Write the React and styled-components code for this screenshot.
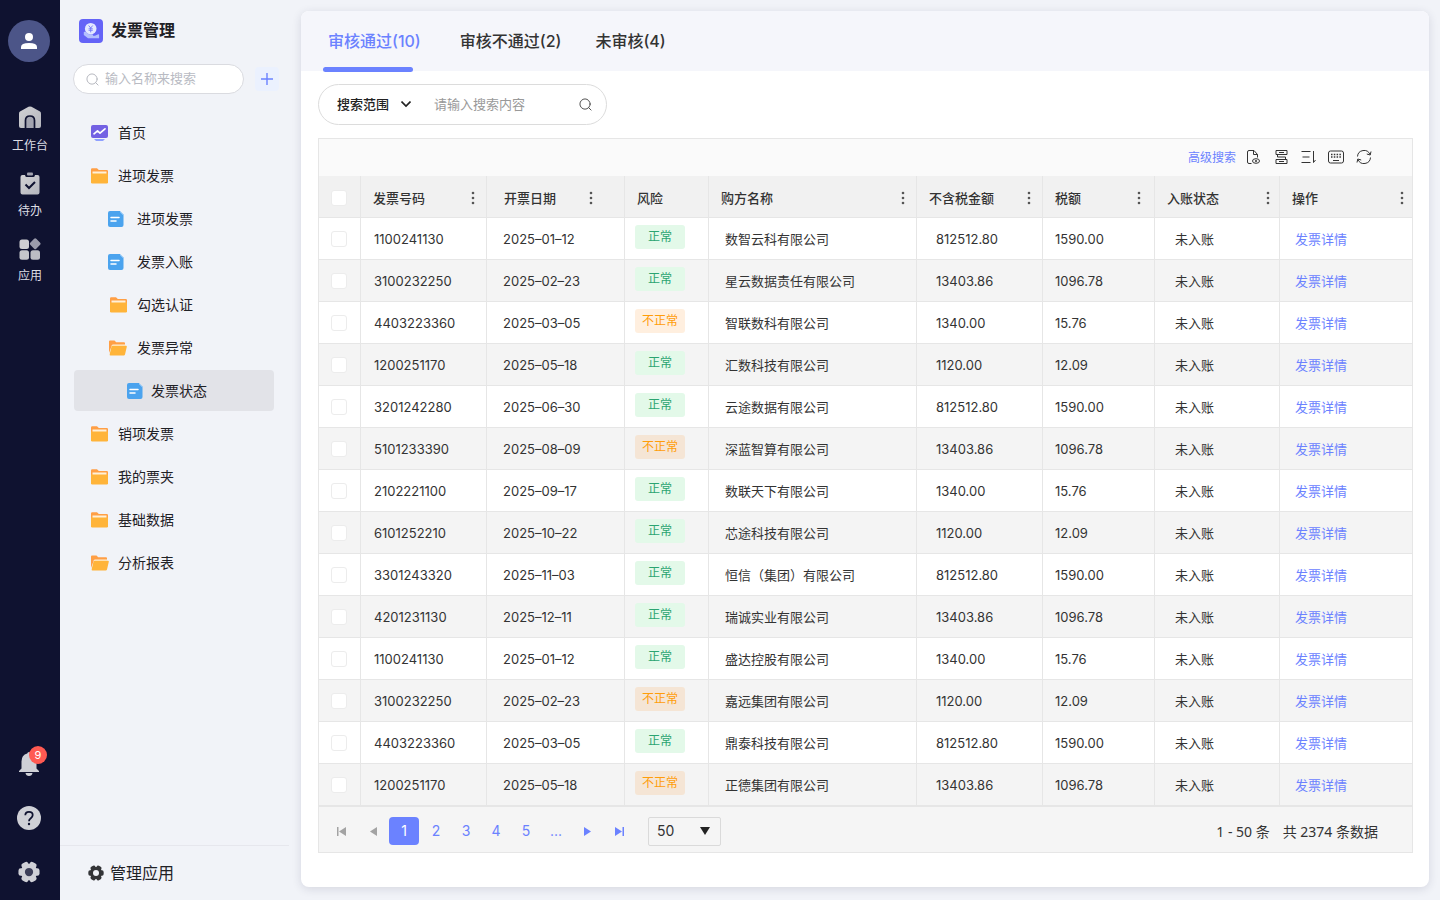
import React from 'react';
import styled, { createGlobalStyle, css } from 'styled-components';

const fontStack = 'Inter, "Noto Sans CJK SC", sans-serif';

const color = {
  rail: '#0f1230',
  page: '#f1f3f8',
  primary: '#6b82ff',
  ink: '#1f2126',
  text: '#333333',
  line: '#e6e6e6',
};

const GlobalStyle = createGlobalStyle`
  *, *::before, *::after { box-sizing: border-box; }
  body {
    margin: 0;
    background: ${color.page};
    color: ${color.text};
    font-family: ${fontStack};
    font-size: 13px;
  }
  button, input, select {
    margin: 0;
    padding: 0;
    border: 0;
    background: none;
    color: inherit;
    font: inherit;
  }
  button, select { cursor: pointer; }
  svg { display: block; flex: none; }
`;

const Page = styled.div`
  display: flex;
  min-height: 100vh;
`;

/* ---------- rail ---------- */

const Rail = styled.nav`
  display: flex;
  flex: none;
  flex-direction: column;
  align-items: center;
  width: 60px;
  padding: 20px 2px 14px 0;
  background: ${color.rail};
`;

const Avatar = styled.button`
  display: grid;
  place-items: center;
  width: 42px;
  height: 42px;
  border-radius: 50%;
  background: #4c5588;
`;

const RailMenu = styled.div`
  display: flex;
  flex-direction: column;
  gap: 17px;
  margin-top: 44px;
  padding-left: 2px;
`;

const RailItem = styled.button`
  display: flex;
  flex-direction: column;
  align-items: center;
  gap: 8px;
  color: #dcdde4;
  font-size: 12px;
  line-height: 16px;
`;

const RailTools = styled.div`
  display: flex;
  flex-direction: column;
  gap: 26px;
  margin-top: auto;
`;

const RailTool = styled.button`
  position: relative;
  display: grid;
  place-items: center;
  width: 28px;
  height: 28px;
`;

const Badge = styled.span`
  position: absolute;
  top: -4px;
  right: -4px;
  width: 18px;
  height: 18px;
  border-radius: 50%;
  background: #ff5a52;
  color: #fff;
  font-size: 11px;
  line-height: 18px;
  text-align: center;
`;

/* ---------- sidebar ---------- */

const Sidebar = styled.aside`
  display: flex;
  flex: none;
  flex-direction: column;
  width: 229px;
`;

const Brand = styled.header`
  display: flex;
  align-items: center;
  gap: 8px;
  padding: 19px 19px 0;
`;

const BrandName = styled.h1`
  margin: 0;
  color: ${color.ink};
  font-size: 16px;
  font-weight: 600;
  line-height: 22px;
  padding-bottom: 2px;
`;

const SideSearch = styled.div`
  display: flex;
  align-items: center;
  gap: 11px;
  padding: 21px 10px 0 13px;
`;

const SideField = styled.label`
  display: flex;
  flex: 1;
  align-items: center;
  gap: 6px;
  height: 30px;
  min-width: 0;
  padding: 0 12px;
  border: 1px solid #dadbe0;
  border-radius: 15px;
  background: #fff;
`;

const TextInput = styled.input`
  flex: 1;
  min-width: 0;
  padding-bottom: 2px;
  outline: none;
  &::placeholder { color: ${(p) => p.$hint}; opacity: 1; }
`;

const AddButton = styled.button`
  display: grid;
  place-items: center;
  width: 24px;
  height: 24px;
  border-radius: 4px;
  background: #ebf1fe;
`;

const Tree = styled.nav`
  display: flex;
  flex-direction: column;
  gap: 2px;
  padding: 18px 15px 0 14px;
`;

const levels = [
  { indent: 17, slot: 17 },
  { indent: 34, slot: 19 },
  { indent: 53, slot: 16 },
];

const TreeItem = styled.a`
  display: grid;
  grid-template-columns: ${(p) => levels[p.$level].slot}px 1fr;
  align-items: center;
  gap: ${(p) => (p.$level === 2 ? 8 : 10)}px;
  height: 41px;
  padding-left: ${(p) => levels[p.$level].indent}px;
  border-radius: 4px;
  background: ${(p) => (p.$active ? '#e2e3e8' : 'transparent')};
  color: ${color.ink};
  font-size: 14px;
  text-decoration: none;
  svg { justify-self: ${(p) => (p.$end ? 'end' : 'start')}; }
`;

const TreeLabel = styled.span`
  padding-bottom: 2px;
`;

const SideFooter = styled.footer`
  margin-top: auto;
  border-top: 1px solid #e6e7ed;
`;

const ManageButton = styled.button`
  display: flex;
  align-items: center;
  gap: 6px;
  height: 54px;
  padding-left: 28px;
  color: ${color.ink};
  font-size: 16px;
`;

/* ---------- content ---------- */

const Card = styled.main`
  flex: 1;
  min-width: 0;
  margin: 11px 11px 13px 12px;
  border-radius: 8px;
  background: #fff;
  box-shadow: 0 2px 10px rgba(40, 44, 80, 0.14);
`;

const Tabs = styled.div`
  display: flex;
  gap: 34px;
  height: 60px;
  padding-left: 22px;
  border-radius: 8px 8px 0 0;
  background: #f5f6fb;
`;

const Tab = styled.button`
  position: relative;
  padding-bottom: 2px;
  color: ${color.text};
  font-size: 16px;
  font-weight: 500;
  ${(p) =>
    p.$active &&
    css`
      padding: 0 5px 2px;
      color: ${color.primary};
      &::after {
        position: absolute;
        bottom: -1px;
        left: 0;
        width: 90px;
        height: 5px;
        border-radius: 3px;
        background: ${color.primary};
        content: '';
      }
    `}
`;

const Body = styled.div`
  padding: 13px 16px 34px 17px;
`;

const SearchBar = styled.div`
  display: flex;
  align-items: center;
  width: 289px;
  height: 41px;
  padding: 0 14px 0 18px;
  border: 1px solid #dcdcdc;
  border-radius: 21px;
`;

const SelectWrap = styled.label`
  display: grid;
  align-items: center;
  svg, select { grid-area: 1 / 1; }
  svg { justify-self: end; pointer-events: none; }
`;

const ScopeSelect = styled.select`
  width: 74px;
  padding-bottom: 2px;
  appearance: none;
  outline: none;
  color: #222;
  font-weight: 500;
`;

const Keyword = styled(TextInput)`
  margin-left: 23px;
`;

const Grid = styled.section`
  margin-top: 13px;
  border: 1px solid ${color.line};
`;

const Toolbar = styled.div`
  display: flex;
  align-items: center;
  justify-content: flex-end;
  gap: 12px;
  height: 37px;
  padding: 0 40px 1px 0;
  background: #fafafa;
`;

const AdvancedLink = styled.a`
  margin-right: -4px;
  padding-bottom: 1px;
  color: ${color.primary};
  font-size: 12px;
  text-decoration: none;
`;

const Table = styled.table`
  width: 100%;
  border-collapse: separate;
  border-spacing: 0;
  table-layout: fixed;
`;

const HeadCell = styled.th`
  height: 42px;
  width: ${(p) => p.$width}px;
  padding: 2px ${(p) => p.$end || 0}px 0 ${(p) => p.$start || 12}px;
  border-right: 1px solid ${color.line};
  border-bottom: 1px solid ${color.line};
  background: #f1f1f1;
  font-weight: 500;
  text-align: left;
  &:last-child { border-right: 0; }
`;

const HeadContent = styled.div`
  display: flex;
  align-items: center;
  justify-content: space-between;
  white-space: nowrap;
`;

const Row = styled.tr`
  background: #fff;
  &:nth-child(even) { background: #f4f4f4; }
`;

const Cell = styled.td`
  height: 42px;
  padding: 0 0 0 ${(p) => p.$start}px;
  border-right: 1px solid ${color.line};
  border-bottom: 1px solid ${color.line};
  white-space: nowrap;
  &:last-child { border-right: 0; }
`;

const Check = styled.input`
  display: block;
  width: 16px;
  height: 16px;
  border: 1px solid #ececec;
  border-radius: 3px;
  background: #fff;
  appearance: none;
  &:checked { border-color: ${color.primary}; background: ${color.primary}; }
`;

const Tag = styled.span`
  display: block;
  width: 50px;
  height: 24px;
  margin-bottom: 3px;
  border-radius: 3px;
  background: ${(p) => (p.$ok ? '#e3f9e9' : 'rgba(255, 150, 40, 0.15)')};
  color: ${(p) => (p.$ok ? '#2ba471' : '#ff9d0a')};
  font-size: 12px;
  line-height: 24px;
  text-align: center;
`;

const DetailLink = styled.a`
  color: ${color.primary};
  text-decoration: none;
`;

const Pager = styled.div`
  display: flex;
  align-items: center;
  height: 46px;
  padding: 3px 34px 0 6px;
  border-top: 1px solid ${color.line};
  background: #f5f5f5;
`;

const NavButton = styled.button`
  display: grid;
  place-items: center;
  width: 32px;
  height: 28px;
  color: ${(p) => (p.disabled ? '#a3a3a3' : color.primary)};
`;

const PageButton = styled.button`
  width: 30px;
  height: 28px;
  margin-right: ${(p) => (p.$active ? 2 : 0)}px;
  padding-bottom: 2px;
  border-radius: 4px;
  background: ${(p) => (p.$active ? color.primary : 'transparent')};
  color: ${(p) => (p.$active ? '#fff' : color.primary)};
  font-size: 14px;
`;

const SizeWrap = styled(SelectWrap)`
  margin-left: 13px;
  svg { margin-right: 11px; }
`;

const SizeSelect = styled.select`
  width: 73px;
  height: 29px;
  padding: 0 0 2px 8px;
  border: 1px solid #dadada;
  border-radius: 2px;
  appearance: none;
  font-size: 14px;
`;

const Summary = styled.p`
  display: flex;
  gap: 13px;
  margin: 0 0 0 auto;
  font-family: "Noto Sans", "Noto Sans CJK SC", sans-serif;
  font-size: 14px;
`;

/* ---------- icons ---------- */

const FolderIcon = () => (
  <svg width="17" height="16" viewBox="0 0 17 16">
    <path d="M0 1.5Q0 .3 1.2.3H6L7.8 2H15.800Q17 2 17 3.200V8H0Z" fill="#ff9f45" />
    <path d="M1.500 3.500h14v4h-14z" fill="#fff0d8" />
    <path d="M0 5.500h17v8.700q0 1.300-1.300 1.300H1.300Q0 15.500 0 14.200Z" fill="#ffb43a" />
  </svg>
);

const FolderOpenIcon = () => (
  <svg width="18" height="16" viewBox="0 0 18 16">
    <path d="M0 1.500Q0 .5 1 .5H5.500L7.200 2.200H15Q16 2.200 16 3.200V5H3L0 13Z" fill="#ff9f45" />
    <path d="M3 5L2.600 6.200H16V4.600H4Q3.200 4.500 3 5Z" fill="#fff0d8" />
    <path d="M3.500 5.800H17q1 0 .8 1l-1.800 7.700q-.3 1-1.300 1H1.500Q.4 15.500.7 14.300L2.500 6.600Q2.700 5.800 3.500 5.800Z" fill="#ffb43a" />
  </svg>
);

const DocIcon = () => (
  <svg width="16" height="16" viewBox="0 0 16 16">
    <path d="M2 0H12L15.500 3.500V14q0 2-2 2H2Q0 16 0 14V2Q0 0 2 0Z" fill="#4ba3ee" />
    <path d="M12 0L15.500 3.500V4.500L12 1Z" fill="#b9dcfb" />
    <path d="M3 6.500h8M3 10h5" stroke="#fff" strokeWidth="1.500" strokeLinecap="round" />
  </svg>
);

const HomeIcon = () => (
  <svg width="17" height="16" viewBox="0 0 17 16">
    <rect width="17" height="13" rx="2" fill="#7361e3" />
    <path d="M3 8.800L6.500 5.800L9 8.200L14 3.800" fill="none" stroke="#fff" strokeWidth="1.700" strokeLinecap="round" strokeLinejoin="round" />
    <path d="M3 14h11l-2 2H5z" fill="#8fa0ff" />
  </svg>
);

const SearchIcon = ({ size, stroke }) => (
  <svg width={size} height={size} viewBox="0 0 14 14" fill="none" stroke={stroke} strokeLinecap="round">
    <circle cx="6.500" cy="6.500" r="5.500" />
    <path d="M10.500 10.500L13 13" />
  </svg>
);

const GearIcon = ({ size, fill, hole }) => (
  <svg width={size} height={size} viewBox="0 0 24 24" fill={fill}>
    <circle cx="12" cy="12" r="9" />
    {[0, 60, 120].map((angle) => (
      <rect key={angle} x=".5" y="8" width="23" height="8" rx="2.500" transform={`rotate(${angle} 12 12)`} />
    ))}
    <circle cx="12" cy="12" r="4.500" fill={hole} />
  </svg>
);

const BrandIcon = () => (
  <svg width="24" height="24" viewBox="0 0 24 24">
    <rect width="24" height="24" rx="4" fill="#6463f7" />
    <circle cx="11.700" cy="9.700" r="5.800" fill="#e3e8ff" />
    <path d="M9.900 6.800l1.800 2.200L13.500 6.800M11.700 9V13M10 9.800h3.400M10 11.300h3.400" fill="none" stroke="#6f78f8" strokeWidth=".9" strokeLinecap="round" />
    <path d="M4.800 13q1.700-.8 3 .6l2 1.700h3.200q1.600.3 1 1.500h2l3.200-1.500q1.300 0 .9 1.300v2.600H9L4.800 16Z" fill="#b3bffd" />
  </svg>
);

const Kebab = () => (
  <svg width="4" height="14" viewBox="0 0 4 14" fill="#555">
    <circle cx="2" cy="2" r="1.300" />
    <circle cx="2" cy="7" r="1.300" />
    <circle cx="2" cy="12" r="1.300" />
  </svg>
);

const RailGradient = ({ id }) => (
  <linearGradient id={id} x1="0" y1="0" x2="1" y2="1">
    <stop offset="0" stopColor="#d2d2d4" />
    <stop offset="1" stopColor="#b4b5bd" />
  </linearGradient>
);

const WorkIcon = () => (
  <svg width="24" height="24" viewBox="0 0 24 24">
    <defs><RailGradient id="railWork" /></defs>
    <path d="M1 7.500Q1 6.300 2 5.600L10.500 .8Q12 0 13.500 .8L22 5.600Q23 6.300 23 7.500V20Q23 22 21 22H3Q1 22 1 20Z" fill="url(#railWork)" />
    <path d="M7.500 22V14.500Q7.500 10 12 10Q16.500 10 16.500 14.500V22" fill="#a3a4b0" stroke={color.rail} strokeWidth="1.700" />
  </svg>
);

const TodoIcon = () => (
  <svg width="24" height="24" viewBox="0 0 24 24">
    <defs><RailGradient id="railTodo" /></defs>
    <path d="M4.500 4H7Q7.200 6 8.500 6H15.500Q16.800 6 17 4H19.500Q21.500 4 21.500 6V21.500Q21.500 23.500 19.500 23.500H4.500Q2.500 23.500 2.500 21.500V6Q2.500 4 4.500 4Z" fill="url(#railTodo)" />
    <rect x="9" y="1.500" width="6" height="3" rx="1" fill="#a3a4b0" />
    <path d="M7.500 13.500L11 17L17 11" fill="none" stroke={color.rail} strokeWidth="2" />
  </svg>
);

const AppsIcon = () => (
  <svg width="24" height="24" viewBox="0 0 24 24">
    <rect x="1.500" y="3.500" width="9.500" height="9.500" rx="2.500" fill="#cfcfd2" />
    <rect x="13" y="3.500" width="8.500" height="8.500" rx="1.500" fill="#9a9bab" transform="rotate(45 17.200 7.700)" />
    <rect x="1.500" y="14.200" width="9.500" height="9.500" rx="2.500" fill="#c6c7cb" />
    <rect x="12.500" y="14.200" width="9.500" height="9.500" rx="2.500" fill="#bcbdc4" />
  </svg>
);

const ToolSvg = ({ children }) => (
  <svg width="16" height="16" viewBox="0 0 16 16" fill="none" stroke="#333">
    {children}
  </svg>
);

const PreviewIcon = () => (
  <ToolSvg>
    <path d="M7.500 14.500H5Q3.500 14.500 3.500 13V3Q3.500 1.500 5 1.500H10L13.500 5.500V8.500M9.500 1.500V5.500H13.500" />
    <ellipse cx="12" cy="12" rx="3.500" ry="2.300" />
    <circle cx="12" cy="12" r=".7" />
  </ToolSvg>
);

const FlowIcon = () => (
  <ToolSvg>
    <path d="M4 1.500H15V5.500H4ZM4 10.500H15V14.500H4ZM7 3.500H12M7 12.500H12M5.500 5.500V8H13.500V10.500" />
  </ToolSvg>
);

const SortIcon = () => (
  <ToolSvg>
    <path d="M1.500 2.500H10.500M2.500 8H9.500M1.500 13.500H10.500M13.500 2V13.500L15.500 11" />
  </ToolSvg>
);

const KeyboardIcon = () => (
  <ToolSvg>
    <rect x=".5" y="2" width="15" height="12" rx="2" />
    <path d="M3 5.500H13.500M3 8H13.500" strokeDasharray="1.500 1.300" strokeWidth="1.500" />
    <path d="M5 11.500H11" />
  </ToolSvg>
);

const RefreshIcon = () => (
  <ToolSvg>
    <path d="M1.500 7.500A6.500 6.500 0 0 1 14 5.500M14.500 8.500A6.500 6.500 0 0 1 2 10.500M15 2.500L14.200 6L10.800 5M1 13.500L1.800 10L5.200 11" />
  </ToolSvg>
);

/* ---------- data ---------- */

const railMenu = [
  { label: '工作台', Icon: WorkIcon },
  { label: '待办', Icon: TodoIcon },
  { label: '应用', Icon: AppsIcon },
];

const tree = [
  { label: '首页', level: 0, Icon: HomeIcon },
  { label: '进项发票', level: 0, Icon: FolderIcon },
  { label: '进项发票', level: 1, Icon: DocIcon },
  { label: '发票入账', level: 1, Icon: DocIcon },
  { label: '勾选认证', level: 1, Icon: FolderIcon },
  { label: '发票异常', level: 1, Icon: FolderOpenIcon },
  { label: '发票状态', level: 2, Icon: DocIcon, active: true },
  { label: '销项发票', level: 0, Icon: FolderIcon },
  { label: '我的票夹', level: 0, Icon: FolderIcon },
  { label: '基础数据', level: 0, Icon: FolderIcon },
  { label: '分析报表', level: 0, Icon: FolderOpenIcon },
];

const columns = [
  { label: '发票号码', width: 126, end: 11 },
  { label: '开票日期', width: 138, start: 17, end: 31 },
  { label: '风险', width: 84 },
  { label: '购方名称', width: 208, end: 11 },
  { label: '不含税金额', width: 126, end: 11 },
  { label: '税额', width: 112, end: 13 },
  { label: '入账状态', width: 125, end: 9 },
  { label: '操作', width: 132, end: 8 },
];

const amounts = [
  ['812512.80', '1590.00'],
  ['13403.86', '1096.78'],
  ['1340.00', '15.76'],
  ['1120.00', '12.09'],
];

const invoices = [
  ['1100241130', '2025–01–12', true, '数智云科有限公司'],
  ['3100232250', '2025–02–23', true, '星云数据责任有限公司'],
  ['4403223360', '2025–03–05', false, '智联数科有限公司'],
  ['1200251170', '2025–05–18', true, '汇数科技有限公司'],
  ['3201242280', '2025–06–30', true, '云途数据有限公司'],
  ['5101233390', '2025–08–09', false, '深蓝智算有限公司'],
  ['2102221100', '2025–09–17', true, '数联天下有限公司'],
  ['6101252210', '2025–10–22', true, '芯途科技有限公司'],
  ['3301243320', '2025–11–03', true, '恒信（集团）有限公司'],
  ['4201231130', '2025–12–11', true, '瑞诚实业有限公司'],
  ['1100241130', '2025–01–12', true, '盛达控股有限公司'],
  ['3100232250', '2025–02–23', false, '嘉远集团有限公司'],
  ['4403223360', '2025–03–05', true, '鼎泰科技有限公司'],
  ['1200251170', '2025–05–18', false, '正德集团有限公司'],
];

export default function App() {
  return (
    <Page>
      <GlobalStyle />
      <Rail aria-label="主导航">
        <Avatar aria-label="个人中心">
          <svg width="16" height="16" viewBox="0 0 16 16" fill="#fff">
            <circle cx="8" cy="4" r="4" />
            <path d="M0 16V14Q0 10 8 10Q16 10 16 14V16Z" />
          </svg>
        </Avatar>
        <RailMenu>
          {railMenu.map(({ label, Icon }) => (
            <RailItem key={label}>
              <Icon />
              {label}
            </RailItem>
          ))}
        </RailMenu>
        <RailTools>
          <RailTool aria-label="通知">
            <svg width="22" height="25" viewBox="0 0 22 25" fill="#cfd0d6">
              <path d="M11 0Q12.500 0 12.800 1.600Q18.500 3 18.500 9.500V16.500L21 19V20H1V19L3.500 16.500V9.500Q3.500 3 9.200 1.600Q9.500 0 11 0Z" />
              <path d="M7.500 21H14.500Q14 24 11 24Q8 24 7.500 21Z" />
            </svg>
            <Badge>9</Badge>
          </RailTool>
          <RailTool aria-label="帮助">
            <svg width="24" height="24" viewBox="0 0 24 24">
              <circle cx="12" cy="12" r="12" fill="#cfd0d6" />
              <path d="M8.300 9.200Q8.300 5.800 12 5.800Q15.700 5.800 15.700 9Q15.700 10.800 13.800 12.200Q12 13.500 12 15.200" fill="none" stroke={color.rail} strokeWidth="1.800" />
              <circle cx="12" cy="18" r="1.200" fill={color.rail} />
            </svg>
          </RailTool>
          <RailTool aria-label="设置">
            <GearIcon size={22} fill="#cfd0d6" hole="#3c3e58" />
          </RailTool>
        </RailTools>
      </Rail>

      <Sidebar>
        <Brand>
          <BrandIcon />
          <BrandName>发票管理</BrandName>
        </Brand>
        <SideSearch>
          <SideField>
            <SearchIcon size={13} stroke="#b0b2ba" />
            <TextInput $hint="#b9bbc3" aria-label="搜索菜单" placeholder="输入名称来搜索" />
          </SideField>
          <AddButton aria-label="新增">
            <svg width="12" height="12" viewBox="0 0 12 12" stroke={color.primary} strokeWidth="1.400">
              <path d="M6 0V12M0 6H12" />
            </svg>
          </AddButton>
        </SideSearch>
        <Tree aria-label="发票菜单">
          {tree.map(({ label, level, Icon, active }, i) => (
            <TreeItem
              key={i}
              href="#"
              $level={level}
              $active={active}
              $end={level === 1 && Icon !== DocIcon}
              aria-current={active ? 'page' : undefined}
            >
              <Icon />
              <TreeLabel>{label}</TreeLabel>
            </TreeItem>
          ))}
        </Tree>
        <SideFooter>
          <ManageButton>
            <GearIcon size={16} fill="#333437" hole={color.page} />
            <TreeLabel>管理应用</TreeLabel>
          </ManageButton>
        </SideFooter>
      </Sidebar>

      <Card>
        <Tabs role="tablist">
          <Tab role="tab" aria-selected="true" $active>审核通过(10)</Tab>
          <Tab role="tab" aria-selected="false">审核不通过(2)</Tab>
          <Tab role="tab" aria-selected="false">未审核(4)</Tab>
        </Tabs>
        <Body>
          <SearchBar>
            <SelectWrap>
              <ScopeSelect aria-label="搜索范围">
                <option>搜索范围</option>
              </ScopeSelect>
              <svg width="10" height="7" viewBox="0 0 10 7" fill="none" stroke="#222" strokeWidth="1.600">
                <path d="M.5 .5L5 5L9.500 .5" />
              </svg>
            </SelectWrap>
            <Keyword $hint="#999" aria-label="搜索内容" placeholder="请输入搜索内容" />
            <SearchIcon size={13} stroke="#444" />
          </SearchBar>

          <Grid>
            <Toolbar>
              <AdvancedLink href="#">高级搜索</AdvancedLink>
              <button aria-label="预览"><PreviewIcon /></button>
              <button aria-label="流程"><FlowIcon /></button>
              <button aria-label="排序"><SortIcon /></button>
              <button aria-label="键盘"><KeyboardIcon /></button>
              <button aria-label="刷新"><RefreshIcon /></button>
            </Toolbar>
            <Table>
              <thead>
                <tr>
                  <HeadCell $width={42}>
                    <Check type="checkbox" aria-label="全选" />
                  </HeadCell>
                  {columns.map(({ label, width, start, end }) => (
                    <HeadCell key={label} $width={width} $start={start} $end={end}>
                      <HeadContent>
                        {label}
                        {end && <Kebab />}
                      </HeadContent>
                    </HeadCell>
                  ))}
                </tr>
              </thead>
              <tbody>
                {invoices.map(([number, date, ok, buyer], i) => (
                  <Row key={i}>
                    <Cell $start={12}>
                      <Check type="checkbox" aria-label={`选择 ${number}`} />
                    </Cell>
                    <Cell $start={13}>{number}</Cell>
                    <Cell $start={16}>{date}</Cell>
                    <Cell $start={10}>
                      <Tag $ok={ok}>{ok ? '正常' : '不正常'}</Tag>
                    </Cell>
                    <Cell $start={16}>{buyer}</Cell>
                    <Cell $start={19}>{amounts[i % 4][0]}</Cell>
                    <Cell $start={12}>{amounts[i % 4][1]}</Cell>
                    <Cell $start={20}>未入账</Cell>
                    <Cell $start={15}>
                      <DetailLink href="#">发票详情</DetailLink>
                    </Cell>
                  </Row>
                ))}
              </tbody>
            </Table>
            <Pager>
              <NavButton disabled aria-label="首页">
                <svg width="9" height="9" viewBox="0 0 9 9" fill="currentColor"><path d="M0 0H1.500V9H0ZM9 0V9L2 4.500Z" /></svg>
              </NavButton>
              <NavButton disabled aria-label="上一页">
                <svg width="7" height="9" viewBox="0 0 7 9" fill="currentColor"><path d="M7 0V9L0 4.500Z" /></svg>
              </NavButton>
              {['1', '2', '3', '4', '5', '...'].map((n) => (
                <PageButton key={n} $active={n === '1'}>{n}</PageButton>
              ))}
              <NavButton aria-label="下一页">
                <svg width="7" height="9" viewBox="0 0 7 9" fill="currentColor"><path d="M0 0V9L7 4.500Z" /></svg>
              </NavButton>
              <NavButton aria-label="末页">
                <svg width="9" height="9" viewBox="0 0 9 9" fill="currentColor"><path d="M9 0H7.500V9H9ZM0 0V9L7 4.500Z" /></svg>
              </NavButton>
              <SizeWrap>
                <SizeSelect aria-label="每页条数">
                  <option>50</option>
                </SizeSelect>
                <svg width="10" height="8" viewBox="0 0 10 8" fill="#222"><path d="M0 0H10L5 8Z" /></svg>
              </SizeWrap>
              <Summary>
                <span>1 - 50 条</span>
                <span>共 2374 条数据</span>
              </Summary>
            </Pager>
          </Grid>
        </Body>
      </Card>
    </Page>
  );
}
